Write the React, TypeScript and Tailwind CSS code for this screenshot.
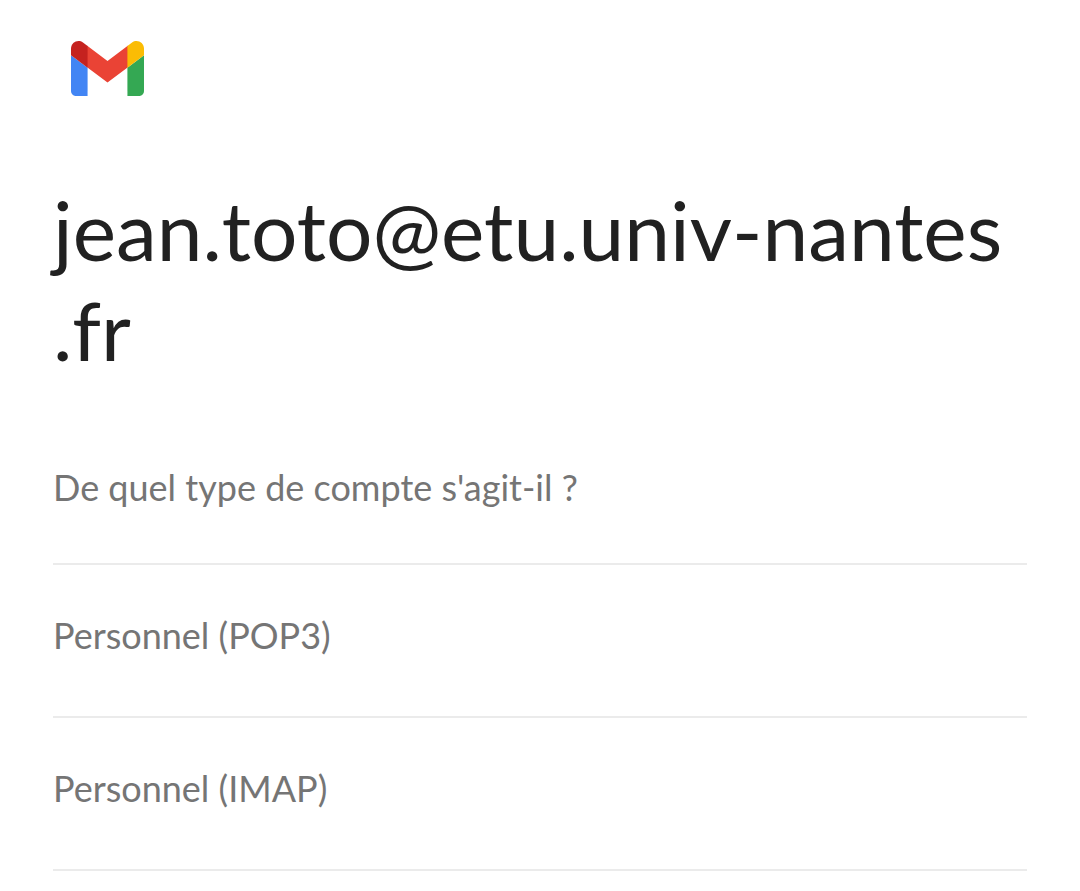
const accountTypes = ['Personnel (POP3)', 'Personnel (IMAP)'];

function GmailLogo() {
    return (
        <svg className="ml-[18px] h-[55px] w-[73px]" viewBox="52 42 88 66" role="img" aria-label="Gmail">
            {/* The envelope flap reaches slightly under the corners so no seam shows */}
            <path fill="#ea4335" d="M71 73.25V47.25L72 48l24 18 24-18 1-.75v26L96 92" />
            <path fill="#4285f4" d="M58 108h14V74L52 59v43c0 3.32 2.69 6 6 6" />
            <path fill="#34a853" d="M120 108h14c3.32 0 6-2.69 6-6V59l-20 15" />
            <path fill="#fbbc04" d="M120 48v26l20-15v-8c0-7.42-8.47-11.65-14.4-7.2" />
            <path fill="#c5221f" d="M52 51v8l20 15V48l-5.6-4.2c-5.94-4.45-14.4-.22-14.4 7.2" />
        </svg>
    );
}

export default function App() {
    return (
        <main className="min-h-screen bg-white px-[53px] pt-[41px] font-[Lato,sans-serif] text-[#757575]">
            <GmailLogo />

            <h1 className="mt-[83px] text-[82px] leading-[100px] wrap-break-word text-[#212121]">
                jean.toto@etu.univ-nantes
                <wbr />
                .fr
            </h1>

            <p className="mt-[84px] pb-[52px] text-[36px] leading-[48px]">
                De quel type de compte s'agit-il ?
            </p>

            <ul className="border-t-2 border-[#ebebeb]">
                {accountTypes.map((type) => (
                    <li key={type} className="border-b-2 border-[#ebebeb]">
                        <button type="button" className="w-full pt-[46px] pb-[57px] text-left text-[36px] leading-[48px]">
                            {type}
                        </button>
                    </li>
                ))}
            </ul>
        </main>
    );
}
